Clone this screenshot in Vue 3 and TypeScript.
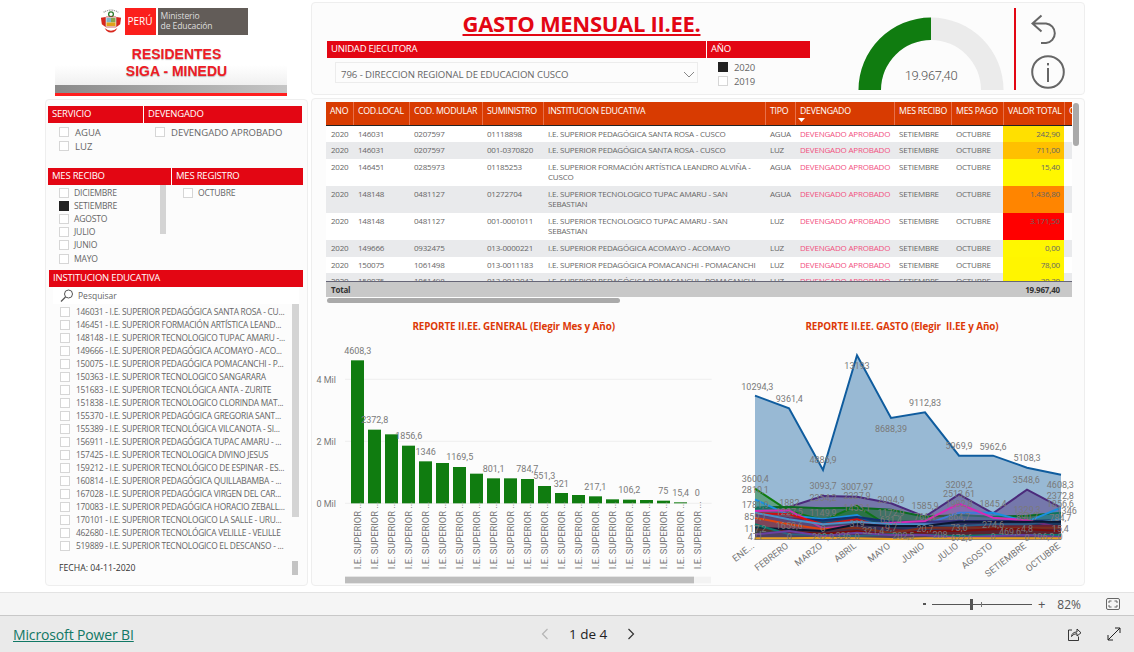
<template>
  <div class="page">
    <main class="report">
      <!-- columna izquierda: logo y filtros -->
      <section class="left">
        <div class="logo">
          <div class="logo-bar"></div>
          <div class="logo-top">
            <svg class="crest" viewBox="0 0 24 28" width="22" height="27">
              <path d="M4 4 Q12 -1 20 4" fill="none" stroke="#777" stroke-width="1.2" stroke-dasharray="1 1" />
              <circle cx="12" cy="6" r="2.6" fill="none" stroke="#2a7a2a" stroke-width="1.4" />
              <path d="M1 10 L6 9 L6 20 L2 17 Z M23 10 L18 9 L18 20 L22 17 Z" fill="#d8261c" />
              <rect x="6" y="9" width="12" height="11" rx="1" fill="#fff" stroke="#b33" stroke-width="0.8" />
              <rect x="7" y="10" width="5" height="5" fill="#7fb7c9" />
              <rect x="12" y="10" width="5" height="5" fill="#8aa64f" />
              <rect x="7" y="15" width="10" height="4" fill="#e0a11a" />
              <path d="M5 21 Q12 27 19 21 L17 24 Q12 28 7 24 Z" fill="#d8261c" />
            </svg>
            <div class="peru">PERÚ</div>
            <div class="minedu">Ministerio<br />de Educación</div>
          </div>
          <div class="residentes">RESIDENTES<br />SIGA - MINEDU</div>
        </div>

        <div class="panel">
          <div class="slicers slicers-a">
            <div class="slicer w95">
              <div class="head">SERVICIO</div>
              <div class="opts opts-big">
                <label v-for="o in servicio" :key="o" class="opt"><i class="cb"></i>{{ o }}</label>
              </div>
            </div>
            <div class="slicer w158">
              <div class="head">DEVENGADO</div>
              <div class="opts opts-big">
                <label class="opt"><i class="cb"></i>DEVENGADO APROBADO</label>
              </div>
            </div>
          </div>

          <div class="slicers slicers-b">
            <div class="slicer w123">
              <div class="head">MES RECIBO</div>
              <div class="opts">
                <label v-for="m in meses" :key="m" class="opt small">
                  <i class="cb" :class="{ on: m === 'SETIEMBRE' }"></i>{{ m }}
                </label>
                <div class="mes-scroll"></div>
              </div>
            </div>
            <div class="slicer w131">
              <div class="head">MES REGISTRO</div>
              <div class="opts">
                <label class="opt small"><i class="cb"></i>OCTUBRE</label>
              </div>
            </div>
          </div>

          <div class="inst">
            <div class="head">INSTITUCION EDUCATIVA</div>
            <div class="search">
              <svg width="14" height="14" viewBox="0 0 14 14">
                <circle cx="8.5" cy="5" r="4" fill="none" stroke="#555" stroke-width="1" />
                <path d="M5.5 8 L1 12.5" stroke="#555" stroke-width="1.2" />
              </svg>
              <span>Pesquisar</span>
            </div>
            <div class="inst-list">
              <label v-for="t in instituciones" :key="t" class="inst-row"><i class="cb"></i>{{ t }}</label>
              <div class="inst-scroll"></div>
            </div>
            <div class="fecha-row">
              <span>FECHA: 04-11-2020</span>
              <i class="fecha-thumb"></i>
            </div>
          </div>
        </div>
      </section>

      <!-- columna derecha -->
      <section class="right">
        <div class="card top-card">
          <div class="top-left">
            <h1>GASTO MENSUAL II.EE.</h1>
            <div class="top-heads">
              <div class="head ue">UNIDAD EJECUTORA</div>
              <div class="head anio">AÑO</div>
            </div>
            <div class="top-filters">
              <div class="dropdown">
                <span>796 - DIRECCION REGIONAL DE EDUCACION CUSCO</span>
                <svg width="12" height="7" viewBox="0 0 12 7">
                  <path d="M1 1 L6 6 L11 1" fill="none" stroke="#888" stroke-width="1" />
                </svg>
              </div>
              <div class="years">
                <label class="opt small"><i class="cb on"></i>2020</label>
                <label class="opt small"><i class="cb"></i>2019</label>
              </div>
            </div>
          </div>

          <div class="gauge">
            <svg width="146" height="74" viewBox="0 0 146 74">
              <path d="M0.5 73 A72.5 72.5 0 0 1 145.5 73 H123 A50 50 0 0 0 23 73 Z" fill="#ebebeb" />
              <path d="M0.5 73 A72.5 72.5 0 0 1 73 0.5 V23 A50 50 0 0 0 23 73 Z" fill="#107c10" />
              <text x="73" y="63" text-anchor="middle" class="gauge-text">19.967,40</text>
            </svg>
          </div>
          <div class="red-line"></div>
          <div class="actions">
            <svg width="30" height="32" viewBox="0 0 30 32">
              <path
                d="M10.5 1.5 L1.5 9.5 L10.5 17.5 M1.5 9.5 H15 A9.8 9.8 0 0 1 15 29 H10"
                fill="none"
                stroke="#666"
                stroke-width="2"
              />
            </svg>
            <svg width="34" height="34" viewBox="0 0 34 34">
              <circle cx="17" cy="17" r="15.8" fill="none" stroke="#666" stroke-width="2" />
              <rect x="16" y="8" width="2" height="2.4" fill="#666" />
              <rect x="16" y="13" width="2" height="14" fill="#666" />
            </svg>
          </div>
        </div>

        <div class="card main-card">
          <div class="table-wrap">
            <div class="t-row t-head">
              <div v-for="h in columnas" :key="h" class="th">{{ h }}</div>
              <svg class="sort" width="7" height="4" viewBox="0 0 7 4"><path d="M0 0 H7 L3.5 4 Z" fill="#fff" /></svg>
            </div>
            <div class="t-body">
              <div
                v-for="(r, i) in filas"
                :key="i"
                class="t-row"
                :class="{ alt: i % 2 === 1 }"
                :style="{ height: r.h + 'px' }"
              >
                <div class="td">2020</div>
                <div class="td">{{ r.local }}</div>
                <div class="td">{{ r.modular }}</div>
                <div class="td">{{ r.sum }}</div>
                <div class="td">{{ r.ie }}</div>
                <div class="td">{{ r.tipo }}</div>
                <div class="td pink">DEVENGADO APROBADO</div>
                <div class="td">SETIEMBRE</div>
                <div class="td">OCTUBRE</div>
                <div class="td val" :style="{ background: r.color }">{{ r.val }}</div>
                <div class="td"></div>
              </div>
            </div>
            <div class="t-row t-total">
              <div class="td b">Total</div>
              <div class="td"></div>
              <div class="td"></div>
              <div class="td"></div>
              <div class="td"></div>
              <div class="td"></div>
              <div class="td"></div>
              <div class="td"></div>
              <div class="td"></div>
              <div class="td val b">19.967,40</div>
              <div class="td"></div>
            </div>
            <div class="v-scroll"></div>
          </div>
          <div class="h-scroll"></div>

          <div class="charts">
            <svg class="chart-a" width="400" height="276" viewBox="0 0 1200 828">
              <text x="581" y="58" text-anchor="middle" class="chart-title">REPORTE II.EE. GENERAL (Elegir Mes y Año)</text>
              <line v-for="g in grid" :key="g.y" x1="75" x2="1175" :y1="g.y" :y2="g.y" stroke="#eee" stroke-width="3" />
              <text v-for="g in grid" :key="g.t" x="48" :y="g.y + 10" text-anchor="end" class="lbl">{{ g.t }}</text>
              <g v-for="(b, i) in barras" :key="i">
                <rect :x="93 + i * 51" :y="b" width="39" :height="577 - b" fill="#107c10" />
                <text
                  class="lbl-x"
                  :transform="`translate(${124 + i * 51} 775) rotate(-90)`"
                >I.E. SUPERIOR ...</text>
              </g>
              <text
                v-for="l in etiquetasBarras"
                :key="l.t"
                :x="l.x"
                :y="l.y + 9"
                text-anchor="middle"
                class="lbl"
              >{{ l.t }}</text>
              <rect x="75" y="797" width="1098" height="20" fill="#f3f3f3" />
              <rect x="75" y="797" width="1047" height="20" fill="#bdbdbd" />
            </svg>

            <svg class="chart-b" width="362" height="276" viewBox="0 0 1086 828">
              <text x="546" y="58" text-anchor="middle" class="chart-title">{{ tituloGasto }}</text>
              <g v-for="s in series" :key="s.color">
                <path :d="areaPath(s.y)" :fill="s.color" :fill-opacity="s.fill" />
                <path :d="linePath(s.y)" fill="none" :stroke="s.color" stroke-width="6" />
              </g>
              <text
                v-for="(l, i) in etiquetasArea"
                :key="i"
                :x="l[1]"
                :y="Number(l[2]) + 9"
                text-anchor="middle"
                class="lbl"
              >{{ l[0] }}</text>
              <text
                v-for="(m, i) in mesesEje"
                :key="m"
                class="lbl-x"
                text-anchor="end"
                :transform="`translate(${ejeX(i)} 708) rotate(-38)`"
              >{{ m }}</text>
            </svg>
          </div>
        </div>
      </section>
    </main>

    <div class="zoom-bar">
      <span class="z-minus"></span>
      <div class="slider"><i class="thumb"></i><i class="tick"></i></div>
      <span class="z-plus">+</span>
      <span class="z-pct">82%</span>
      <svg width="14" height="12" viewBox="0 0 14 12">
        <rect x="0.5" y="0.5" width="13" height="11" rx="1.5" fill="none" stroke="#666" />
        <path d="M3 5 V3 H5.5 M8.5 3 H11 V5 M11 7 V9 H8.5 M5.5 9 H3 V7" fill="none" stroke="#666" />
      </svg>
    </div>

    <footer class="foot">
      <a class="pbi">Microsoft Power BI</a>
      <div class="pager">
        <svg width="8" height="12" viewBox="0 0 8 12"><path d="M6.5 1 L1.5 6 L6.5 11" fill="none" stroke="#b5b5b5" stroke-width="1.2" /></svg>
        <span>1 de 4</span>
        <svg width="8" height="12" viewBox="0 0 8 12"><path d="M1.5 1 L6.5 6 L1.5 11" fill="none" stroke="#333" stroke-width="1.2" /></svg>
      </div>
      <div class="foot-icons">
        <svg width="15" height="15" viewBox="0 0 15 15">
          <path d="M5 3 H1.5 V13.5 H11.5 V9.5" fill="none" stroke="#222" stroke-width="0.9" />
          <path d="M4.5 9.5 Q5 5 10 5 V2 L14 5.8 L10 9 V6.7 Q6.5 6.5 4.5 9.5 Z" fill="none" stroke="#222" stroke-width="0.9" />
        </svg>
        <svg width="14" height="14" viewBox="0 0 14 14">
          <path d="M1 13 L13 1 M8 1 H13 V6 M1 8 V13 H6" fill="none" stroke="#222" stroke-width="1" />
        </svg>
      </div>
    </footer>
  </div>
</template>

<script setup lang="ts">
const servicio = ['AGUA', 'LUZ']
const meses = ['DICIEMBRE', 'SETIEMBRE', 'AGOSTO', 'JULIO', 'JUNIO', 'MAYO']

const instituciones = [
  '146031 - I.E. SUPERIOR PEDAGÓGICA SANTA ROSA - CU...',
  '146451 - I.E. SUPERIOR FORMACIÓN ARTÍSTICA LEAND...',
  '148148 - I.E. SUPERIOR TECNOLOGICO TUPAC AMARU -...',
  '149666 - I.E. SUPERIOR PEDAGÓGICA ACOMAYO - ACO...',
  '150075 - I.E. SUPERIOR PEDAGÓGICA POMACANCHI - P...',
  '150363 - I.E. SUPERIOR TECNOLOGICO SANGARARA',
  '151683 - I.E. SUPERIOR TECNOLÓGICA ANTA - ZURITE',
  '151838 - I.E. SUPERIOR TECNOLOGICO CLORINDA MAT...',
  '155370 - I.E. SUPERIOR PEDAGÓGICA GREGORIA SANT...',
  '155389 - I.E. SUPERIOR TECNOLÓGICA VILCANOTA - SI...',
  '156911 - I.E. SUPERIOR PEDAGÓGICA TUPAC AMARU - ...',
  '157425 - I.E. SUPERIOR TECNOLOGICA DIVINO JESUS',
  '159212 - I.E. SUPERIOR TECNOLÓGICO DE ESPINAR - ES...',
  '160814 - I.E. SUPERIOR PEDAGÓGICA QUILLABAMBA - ...',
  '167028 - I.E. SUPERIOR PEDAGÓGICA VIRGEN DEL CAR...',
  '170083 - I.E. SUPERIOR PEDAGÓGICA HORACIO ZEBALL...',
  '170101 - I.E. SUPERIOR TECNOLOGICO LA SALLE - URU...',
  '462680 - I.E. SUPERIOR TECNOLÓGICA VELILLE - VELILLE',
  '519889 - I.E. SUPERIOR TECNOLOGICO EL DESCANSO - ...',
]

const columnas = [
  'ANO', 'COD.LOCAL', 'COD. MODULAR', 'SUMINISTRO', 'INSTITUCION EDUCATIVA',
  'TIPO', 'DEVENGADO', 'MES RECIBO', 'MES PAGO', 'VALOR TOTAL', 'C',
]

const filas = [
  { h: 16, local: '146031', modular: '0207597', sum: '01118898', ie: 'I.E. SUPERIOR PEDAGÓGICA SANTA ROSA - CUSCO', tipo: 'AGUA', val: '242,90', color: '#ffe000' },
  { h: 17, local: '146031', modular: '0207597', sum: '001-0370820', ie: 'I.E. SUPERIOR PEDAGÓGICA SANTA ROSA - CUSCO', tipo: 'LUZ', val: '711,00', color: '#ffc000' },
  { h: 27, local: '146451', modular: '0285973', sum: '01185253', ie: 'I.E. SUPERIOR FORMACIÓN ARTÍSTICA LEANDRO ALVIÑA - CUSCO', tipo: 'AGUA', val: '15,40', color: '#fff700' },
  { h: 27, local: '148148', modular: '0481127', sum: '01272704', ie: 'I.E. SUPERIOR TECNOLOGICO TUPAC AMARU - SAN SEBASTIAN', tipo: 'AGUA', val: '1.436,80', color: '#ff8500' },
  { h: 27, local: '148148', modular: '0481127', sum: '001-0001011', ie: 'I.E. SUPERIOR TECNOLOGICO TUPAC AMARU - SAN SEBASTIAN', tipo: 'LUZ', val: '3.171,50', color: '#ff0000' },
  { h: 17, local: '149666', modular: '0932475', sum: '013-0000221', ie: 'I.E. SUPERIOR PEDAGÓGICA ACOMAYO - ACOMAYO', tipo: 'LUZ', val: '0,00', color: '#fff700' },
  { h: 16, local: '150075', modular: '1061498', sum: '013-0011183', ie: 'I.E. SUPERIOR PEDAGÓGICA POMACANCHI - POMACANCHI', tipo: 'LUZ', val: '78,00', color: '#fff500' },
  { h: 16, local: '150075', modular: '1061498', sum: '013-0012043', ie: 'I.E. SUPERIOR PEDAGÓGICA POMACANCHI - POMACANCHI', tipo: 'LUZ', val: '30,30', color: '#fff500' },
]

const tituloGasto = 'REPORTE II.EE. GASTO (Elegir\u00a0 II.EE y Año)'

// coordenadas en la escala del viewBox (3x)
const grid = [
  { y: 205, t: '4 Mil' },
  { y: 391, t: '2 Mil' },
  { y: 577, t: '0 Mil' },
]

const barras = [148, 356, 370, 404, 451, 456, 468, 488, 502, 502, 504, 525, 546, 552, 556, 565, 566, 567, 569, 574, 577]

const etiquetasBarras = [
  { t: '4608,3', x: 113, y: 120 },
  { t: '2372,8', x: 164, y: 327 },
  { t: '1856,6', x: 266, y: 375 },
  { t: '1346', x: 317, y: 423 },
  { t: '1169,5', x: 419, y: 438 },
  { t: '801,1', x: 521, y: 473 },
  { t: '784,7', x: 622, y: 473 },
  { t: '551,3', x: 673, y: 495 },
  { t: '321', x: 724, y: 519 },
  { t: '217,1', x: 826, y: 528 },
  { t: '106,2', x: 928, y: 537 },
  { t: '75', x: 1030, y: 540 },
  { t: '15,4', x: 1082, y: 546 },
  { t: '0', x: 1132, y: 546 },
]

const mesesEje = ['ENE...', 'FEBRERO', 'MARZO', 'ABRIL', 'MAYO', 'JUNIO', 'JULIO', 'AGOSTO', 'SETIEMBRE', 'OCTUBRE']

const BASE = 685
const ejeX = (i: number) => 105 + i * 102

const linePath = (ys: number[]) => ys.map((y, i) => `${i ? 'L' : 'M'}${ejeX(i)} ${y}`).join(' ')
const areaPath = (ys: number[]) => `${linePath(ys)} L${ejeX(9)} ${BASE} L${ejeX(0)} ${BASE} Z`

const series = [
  { color: '#0f5c9e', fill: 0.42, y: [254, 292, 477, 133, 321, 304, 434, 434, 470, 491] },
  { color: '#4b2a7b', fill: 0.45, y: [590, 588, 555, 557, 577, 617, 550, 607, 536, 590] },
  { color: '#107c10', fill: 0.4, y: [533, 600, 628, 585, 650, 665, 655, 660, 665, 660] },
  { color: '#0b6b20', fill: 0.5, y: [590, 588, 592, 590, 596, 617, 612, 617, 614, 605] },
  { color: '#1a8fe0', fill: 0.3, y: [565, 612, 625, 612, 668, 640, 605, 605, 632, 590] },
  { color: '#12306e', fill: 0.7, y: [610, 622, 628, 618, 632, 632, 630, 630, 630, 628] },
  { color: '#d42bb5', fill: 0.2, y: [600, 598, 652, 642, 635, 630, 578, 620, 628, 650] },
  { color: '#d01010', fill: 0.25, y: [607, 610, 640, 625, 655, 665, 650, 645, 645, 645] },
  { color: '#4a90c8', fill: 0.2, y: [605, 625, 640, 632, 640, 640, 645, 640, 640, 625] },
  { color: '#e0440e', fill: 0.25, y: [620, 640, 655, 650, 665, 650, 650, 650, 650, 650] },
  { color: '#0a1630', fill: 0.45, y: [650, 655, 660, 640, 645, 645, 632, 632, 632, 632] },
  { color: '#7b0c0c', fill: 0.35, y: [655, 662, 668, 660, 672, 660, 660, 655, 655, 660] },
  { color: '#0a7a6e', fill: 0.35, y: [640, 670, 672, 675, 670, 672, 675, 672, 672, 672] },
  { color: '#6b3fa0', fill: 0.35, y: [670, 660, 675, 665, 672, 672, 680, 675, 672, 678] },
  { color: '#e8a020', fill: 0.3, y: [682, 682, 680, 682, 684, 682, 682, 682, 682, 682] },
]

const etiquetasArea: [string, number, number][] = [
  ['10294,3', 112, 228], ['9361,4', 208, 264], ['4886,9', 309, 447], ['13193', 411, 165],
  ['8688,39', 513, 354], ['9112,83', 615, 276], ['5969,9', 717, 405], ['5962,6', 819, 408],
  ['5108,3', 921, 440], ['3600,4', 106, 503], ['2810,1', 106, 537], ['3093,7', 309, 524],
  ['3007,97', 411, 529], ['2094,9', 513, 566], ['3209,2', 717, 522], ['3548,6', 919, 506],
  ['4608,3', 1021, 522], ['2513,61', 717, 549], ['2372,8', 1021, 555], ['2354,2', 309, 560],
  ['2327,9', 411, 556], ['1781,9', 106, 583], ['1882', 208, 575], ['1856,6', 1021, 580],
  ['1585,9', 615, 586], ['1845,4', 819, 580], ['1982,8', 717, 578], ['1453,1', 411, 592],
  ['1149,9', 309, 607], ['1172,9', 513, 606], ['1329,3', 921, 598], ['859,1', 106, 619],
  ['1227,5', 208, 603], ['864,7', 717, 618], ['766,1', 615, 617], ['890,7', 921, 618],
  ['784,7', 1021, 620], ['1346', 1040, 600], ['631,4', 513, 628], ['1659,6', 208, 645],
  ['319', 411, 640], ['274,6', 819, 642], ['117,2', 106, 653], ['0', 309, 655],
  ['321,4', 460, 660], ['9,7', 513, 650], ['20,7', 615, 655], ['73,6', 717, 652],
  ['4,8', 921, 655], ['15,4', 1021, 655], ['469,6', 870, 662], ['471', 106, 678],
  ['0', 208, 678], ['292,9', 309, 678], ['336', 370, 675], ['0', 411, 678],
  ['202,5', 550, 675], ['208', 660, 673], ['672,6', 725, 680], ['0', 819, 677],
  ['0', 921, 680], ['196,2', 970, 677], ['0', 1020, 677],
]
</script>

<style>
html,
body {
  margin: 0;
  background: #fff;
}
</style>

<style scoped>
.page {
  width: 1134px;
  height: 652px;
  overflow: hidden;
  display: flex;
  flex-direction: column;
  font-family: 'Open Sans', 'Liberation Sans', sans-serif;
  color: #666;
  background: #fff;
}
.report {
  height: 592px;
  display: flex;
  flex: none;
}
.left {
  width: 311px;
  box-sizing: border-box;
  padding-left: 45px;
}
.logo {
  height: 99px;
  display: flex;
  flex-direction: column;
  align-items: center;
  width: 263px;
  position: relative;
}
.logo-top {
  position: relative;
  display: flex;
  align-items: center;
  gap: 2px;
  margin-top: 8px;
  margin-right: 6px;
  height: 27px;
}
.crest {
  margin-right: 1px;
}
.peru {
  width: 31px;
  height: 27px;
  background: #fb1f1c;
  color: #fff;
  font-size: 10px;
  line-height: 27px;
  text-align: center;
}
.minedu {
  width: 90px;
  height: 27px;
  box-sizing: border-box;
  padding: 4px 0 0 3px;
  background: #625c58;
  color: #ddd;
  font-size: 8.6px;
  line-height: 9.5px;
  letter-spacing: -0.1px;
}
.residentes {
  position: relative;
  margin-top: 11px;
  font-family: 'Liberation Sans', sans-serif;
  font-weight: 700;
  font-size: 14px;
  line-height: 17px;
  color: #ee1c25;
  text-align: center;
  text-shadow: 0 1px 1px rgba(0, 0, 0, 0.25);
}
.logo-bar {
  position: absolute;
  left: 10px;
  top: 65px;
  width: 232px;
  height: 31px;
  background:
    linear-gradient(#ff1f1f, #ff1f1f) 0 100% / 100% 3px no-repeat,
    linear-gradient(90deg, #8a8a8a, #c6c6c6) 0 20px / 100% 8px no-repeat,
    linear-gradient(#fff, #f0f0f0) 0 0 / 100% 20px no-repeat;
}
.panel {
  width: 263px;
  height: 487px;
  box-sizing: border-box;
  border: 1px solid #eee;
  border-radius: 4px;
  background: #fcfcfc;
  padding: 6px 0 0 2px;
}
.head {
  height: 17px;
  background: #e30613;
  color: #fff;
  font-size: 9.5px;
  line-height: 16px;
  padding-left: 4px;
  box-sizing: border-box;
  letter-spacing: -0.2px;
  white-space: nowrap;
  overflow: hidden;
}
.slicers {
  display: flex;
  gap: 1px;
}
.slicers-a {
  height: 62px;
}
.slicers-b {
  height: 102px;
}
.w95 {
  width: 95px;
}
.w158 {
  width: 158px;
}
.w123 {
  width: 123px;
}
.w131 {
  width: 131px;
}
.opts {
  position: relative;
  padding: 1px 0 0 11px;
}
.opts-big {
  padding-top: 2px;
}
.opt {
  display: flex;
  align-items: center;
  height: 14px;
  font-size: 9.5px;
  letter-spacing: 0;
  white-space: nowrap;
}
.opt.small {
  height: 13.2px;
  font-size: 8.6px;
  letter-spacing: -0.2px;
}
.cb {
  flex: none;
  display: block;
  width: 8px;
  height: 8px;
  border: 1px solid #d6d6d6;
  background: #fff;
  margin-right: 6px;
}
.opt.small .cb {
  margin-right: 5px;
}
.cb.on {
  background: #222;
  border-color: #222;
}
.mes-scroll {
  position: absolute;
  left: 112px;
  top: 0;
  width: 6px;
  height: 49px;
  background: #d4d4d4;
}
.inst {
  width: 254px;
  margin-left: 1px;
}
.search {
  display: flex;
  align-items: center;
  gap: 4px;
  height: 17px;
  margin: 0 4px;
  padding-left: 7px;
  background: #fff;
  font-size: 8.5px;
}
.inst-list {
  position: relative;
  height: 249px;
  margin: 0 4px;
  padding-top: 1px;
  box-sizing: border-box;
  overflow: hidden;
}
.inst-row {
  display: flex;
  align-items: center;
  height: 13px;
  padding-left: 7px;
  font-size: 8.4px;
  letter-spacing: -0.24px;
  white-space: nowrap;
}
.inst-scroll {
  position: absolute;
  right: 0;
  top: 0;
  width: 7px;
  height: 213px;
  background: #d4d4d4;
}
.fecha-row {
  display: flex;
  align-items: center;
  justify-content: space-between;
  height: 14px;
  margin: 8px 5px 0 10px;
  font-size: 8.7px;
  color: #333;
}
.fecha-thumb {
  display: block;
  width: 6px;
  height: 14px;
  background: #c4c4c4;
}
.right {
  width: 774px;
}
.card {
  box-sizing: border-box;
  border: 1px solid #eee;
  border-radius: 4px;
  background: #fcfcfc;
}
.top-card {
  height: 93px;
  margin-top: 2px;
  display: flex;
  padding-left: 15px;
}
.top-left {
  width: 483px;
  flex: none;
}
h1 {
  margin: 6px 0 0 26px;
  height: 32px;
  font-size: 22px;
  line-height: 28px;
  font-weight: 700;
  color: #e30613;
  text-align: center;
  text-decoration: underline;
  letter-spacing: -0.3px;
}
.top-heads {
  display: flex;
  gap: 1px;
}
.ue {
  width: 379px;
}
.anio {
  width: 103px;
}
.top-filters {
  display: flex;
  margin-top: 4px;
}
.dropdown {
  width: 363px;
  height: 21px;
  margin-left: 8px;
  box-sizing: border-box;
  border: 1px solid #ececec;
  display: flex;
  align-items: center;
  justify-content: space-between;
  padding: 3px 2px 0 5px;
  font-size: 9.6px;
  letter-spacing: -0.07px;
}
.years {
  margin-left: 20px;
  margin-top: -2px;
}
.years .opt {
  height: 14px;
  font-size: 9.5px;
}
.years .opt .cb {
  margin-right: 6px;
}
.gauge {
  margin: 14px 0 0 48px;
  flex: none;
}
.gauge-text {
  font-family: 'Roboto', sans-serif;
  font-weight: 300;
  font-size: 13px;
  letter-spacing: -0.4px;
  fill: #555;
}
.red-line {
  flex: none;
  width: 2px;
  height: 82px;
  margin: 5px 0 0 10px;
  background: #e30613;
}
.actions {
  margin-left: 15px;
  padding-top: 11px;
  display: flex;
  flex-direction: column;
  gap: 9px;
}
.main-card {
  height: 488px;
  margin-top: 3px;
  padding: 3px 0 0 14px;
}
.table-wrap {
  position: relative;
  width: 746px;
  font-size: 8px;
}
.t-row {
  display: grid;
  grid-template-columns: 27px 56px 73px 61px 222px 30px 99px 57px 52px 61px 8px;
  background: #fff;
  overflow: hidden;
}
.t-row.alt {
  background: #e9eaec;
}
.t-head {
  position: relative;
  height: 24px;
  background: #d83b01;
  border-bottom: 1px solid #222;
  box-sizing: border-box;
}
.th {
  color: #fff;
  font-size: 8.8px;
  line-height: 10px;
  padding: 4px 0 0 4px;
  border-left: 1px solid #e8704a;
  white-space: nowrap;
  letter-spacing: -0.28px;
}
.th:first-child {
  border-left: 0;
}
.sort {
  position: absolute;
  left: 472px;
  top: 16px;
}
.t-body {
  height: 155px;
  overflow: hidden;
}
.td {
  padding: 3px 4px 0 5px;
  line-height: 10px;
  letter-spacing: -0.2px;
  overflow: hidden;
}
.pink {
  color: #f2517f;
  white-space: nowrap;
}
.val {
  text-align: right;
}
.t-total {
  height: 16px;
  background: #c8c8c8;
  border-top: 1px solid #667;
  box-sizing: border-box;
}
.b {
  font-weight: 700;
  color: #333;
}
.v-scroll {
  position: absolute;
  left: 747px;
  top: 1px;
  width: 6px;
  height: 43px;
  border-radius: 3px;
  background: #aaa;
}
.h-scroll {
  width: 293px;
  height: 5px;
  margin: 1px 0 0 1px;
  border-radius: 3px;
  background: #aaa;
}
.charts {
  display: flex;
  margin: 8px 0 0 -6px;
}
.charts svg {
  overflow: visible;
}
.chart-title {
  font-weight: 700;
  font-size: 29.6px;
  letter-spacing: -0.3px;
  fill: #dd3a08;
}
.lbl {
  font-family: 'Roboto', sans-serif;
  font-size: 27px;
  fill: #7a7a7a;
}
.lbl-x {
  font-family: 'Roboto', sans-serif;
  font-size: 28px;
  fill: #777;
}
.zoom-bar {
  height: 23px;
  flex: none;
  box-sizing: border-box;
  border-top: 1px solid #e3e3e3;
  background: #f5f5f5;
  display: flex;
  align-items: center;
  justify-content: flex-end;
  padding-right: 14px;
  font-size: 12px;
  color: #555;
}
.z-minus {
  width: 3px;
  height: 1.5px;
  background: #555;
  margin-right: 6px;
}
.slider {
  position: relative;
  width: 100px;
  height: 1px;
  background: #555;
}
.thumb {
  position: absolute;
  left: 38px;
  top: -5px;
  width: 3px;
  height: 11px;
  background: #555;
}
.tick {
  position: absolute;
  left: 49px;
  top: -2px;
  width: 1px;
  height: 5px;
  background: #777;
}
.z-plus {
  margin-left: 6px;
  font-size: 13px;
}
.z-pct {
  margin-left: 12px;
  margin-right: 25px;
  font-size: 12px;
}
.foot {
  flex: 1;
  position: relative;
  box-sizing: border-box;
  border-top: 1px solid #c8c8c8;
  background: #eaeaea;
  display: flex;
  align-items: center;
  justify-content: space-between;
  padding: 0 13px;
}
.pbi {
  font-size: 14px;
  color: #117865;
  text-decoration: underline;
  letter-spacing: -0.14px;
}
.pager {
  position: absolute;
  left: 541px;
  top: 0;
  height: 100%;
  display: flex;
  align-items: center;
  gap: 20px;
  font-size: 13.5px;
  color: #222;
}
.foot-icons {
  display: flex;
  align-items: center;
  gap: 25px;
}
</style>
